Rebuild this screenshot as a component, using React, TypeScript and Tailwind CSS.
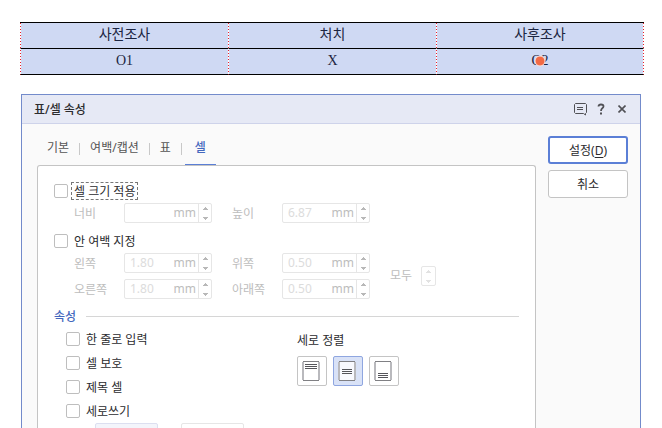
import { useState } from "react";

type AlignType = "top" | "middle" | "bottom";

interface SpinFieldProps {
  id: string;
  label: string;
  value: string;
}

function SpinArrows({ faint = false }: { faint?: boolean }) {
  return (
    <svg
      className={faint ? "text-[#e2e2e2]" : "text-[#b8b8b8]"}
      width="12"
      height="18"
      viewBox="0 0 12 18"
      fill="currentColor"
      shapeRendering="crispEdges"
      aria-hidden="true"
    >
      <path d="M6 3h1v1h1v1h1v1H4V5h1V4h1z" />
      <path d="M4 13h5v1H8v1H7v1H6v-1H5v-1H4z" />
    </svg>
  );
}

function SpinField({ id, label, value }: SpinFieldProps) {
  return (
    <div className="flex items-center">
      <label htmlFor={id} className="w-[50px] shrink-0 pt-[2px] leading-4 text-[#bdbdbd]">
        {label}
      </label>
      <div className="flex h-5 w-22 shrink-0 items-center rounded-[2px] border border-[#e6e6e6] bg-white">
        <input
          id={id}
          defaultValue={value}
          disabled
          className="w-10 min-w-0 flex-1 pl-[5px] text-[#dcdcdc]"
        />
        <span className="pr-[2px] text-[#bdbdbd]">mm</span>
        <span className="border-l border-[#e6e6e6]">
          <SpinArrows />
        </span>
      </div>
    </div>
  );
}

function CheckRow({ label, focused = false }: { label: string; focused?: boolean }) {
  return (
    <label className="flex h-[18px] items-center">
      <input
        type="checkbox"
        className="size-[14px] shrink-0 appearance-none rounded-[2px] border border-[#bebebe] bg-white checked:bg-[#5b7fd6]"
      />
      <span
        className={
          focused
            ? "ml-[3px] border border-dashed border-[#777777] px-[2px] pt-[2px] leading-[14px]"
            : "ml-[6px] pt-[2px] leading-4"
        }
      >
        {label}
      </span>
    </label>
  );
}

function AlignIcon({ type }: { type: AlignType }) {
  const top = { top: 4, middle: 9, bottom: 13 }[type];

  return (
    <svg width="18" height="20" viewBox="0 0 18 20" fill="none" aria-hidden="true">
      <rect x="0.5" y="0.5" width="17" height="19" rx="1.5" fill="#ffffff" fillOpacity="0.8" />
      <path d="M1 1v18M17 1v18" stroke="#b9b9bd" strokeWidth="2" />
      <path d="M1 .5h16M1 19.5h16" stroke="#808084" />
      {[0, 2, 4].map((offset) => (
        <path
          key={offset}
          d={`M${type === "top" ? 3 : 4} ${top + offset - 0.5}h${type === "top" ? 12 : 10}`}
          stroke="#55555a"
        />
      ))}
    </svg>
  );
}

const columns = ["사전조사", "처치", "사후조사"];
const tabs = ["기본", "여백/캡션", "표", "셀"];
const properties = ["한 줄로 입력", "셀 보호", "제목 셀", "세로쓰기"];
const alignments: { type: AlignType; title: string }[] = [
  { type: "top", title: "위" },
  { type: "middle", title: "가운데" },
  { type: "bottom", title: "아래" },
];

function DocumentTable() {
  // The table's red dots show through the transparent side borders of the cells
  const cell =
    "h-[26px] border-b border-l border-b-black border-l-transparent bg-[#cfd9f3] bg-clip-padding p-0 pb-px font-normal last:border-r last:border-r-transparent";

  return (
    <table className="w-full table-fixed border-separate border-spacing-0 border-t border-black bg-[repeating-linear-gradient(to_bottom,#e8202c_0px,#e8202c_1px,#ffffff_1px,#ffffff_3px)] text-center font-['Liberation_Serif','Noto_Sans_CJK_KR',serif] text-sm leading-5 text-[#1c2541]">
      <thead>
        <tr>
          {columns.map((name) => (
            <th key={name} className={cell}>
              {name}
            </th>
          ))}
        </tr>
      </thead>
      <tbody>
        <tr>
          <td className={cell}>O1</td>
          <td className={cell}>X</td>
          <td className={cell}>
            <span className="relative">
              O2
              {/* pointer marker */}
              <span className="absolute top-1/2 left-1/2 size-[11px] -translate-x-1/2 -translate-y-1/2 rounded-full border border-[#fbe3dc] bg-[#f26a45]" />
            </span>
          </td>
        </tr>
      </tbody>
    </table>
  );
}

function TitleBar() {
  return (
    <header className="flex h-[29px] items-center border-b border-[#ced3ea] bg-[#e6e9f5] pr-[11px] pl-3">
      <h1 className="flex-1 pt-[2px] font-medium">표/셀 속성</h1>
      <div className="flex items-center gap-[7px] text-[#505055]">
        <button type="button" aria-label="의견">
          <svg width="13" height="13" viewBox="0 0 13 13" fill="none" stroke="currentColor">
            <path d="M1.5 .5h10l1 1v8l-1 1v1.500l-2-1.500h-8l-1-1v-8z" />
            <path d="M3 4.500h6M3 6.500h6" />
          </svg>
        </button>
        <button type="button" aria-label="도움말" className="px-[3px]">
          <svg width="8" height="12" viewBox="0 0 8 12" fill="none" stroke="currentColor" strokeWidth="1.800">
            <path d="M1.500 3.500Q1.500 1.500 4 1.500t2.500 1.800Q6.500 4.500 5.300 5.300T4 8" />
            <path d="M4 9.500v2" strokeWidth="2" />
          </svg>
        </button>
        <button type="button" aria-label="닫기" className="p-[3px]">
          <svg width="8" height="8" viewBox="0 0 8 8" stroke="currentColor" strokeWidth="1.600">
            <path d="M.5.5l7 7M7.500.5l-7 7" />
          </svg>
        </button>
      </div>
    </header>
  );
}

function App() {
  const [activeTab, setActiveTab] = useState("셀");
  const [align, setAlign] = useState<AlignType>("middle");

  return (
    <main className="h-screen overflow-hidden bg-white pt-[22px] pr-[18px] pl-5 font-['Noto_Sans','Noto_Sans_CJK_KR',sans-serif] text-xs text-[#2b2b2e]">
      <DocumentTable />

      <section className="mt-[19px] mr-[3px] ml-px border border-[#738bcb] bg-[#fafafa] pb-5">
        <TitleBar />

        <div className="flex items-start gap-3 pr-3 pl-[15px]">
          <div className="min-w-0 flex-1">
            {/* Tabs */}
            <nav className="flex h-[41px] items-end">
              {tabs.map((tab, index) => (
                <div key={tab} className="flex items-end">
                  {index > 0 && <span className="mb-[10px] h-3 w-px bg-[#c8c8c8]" />}
                  <button
                    type="button"
                    onClick={() => setActiveTab(tab)}
                    className={`h-7 px-[10px] pb-[6px] ${
                      activeTab === tab
                        ? "ml-[3px] border-b border-[#5b7fd6] font-medium text-[#4468be]"
                        : "border-b border-transparent text-[#555555]"
                    }`}
                  >
                    {tab}
                  </button>
                </div>
              ))}
            </nav>

            <div className="rounded-t-[3px] border border-b-0 border-[#c4c4c4] bg-white px-4 pt-4 pb-10">
              {/* Cell size */}
              <CheckRow label="셀 크기 적용" focused />
              <div className="mt-[3px] ml-5 flex gap-5">
                <SpinField id="width" label="너비" value="" />
                <SpinField id="height" label="높이" value="6.87" />
              </div>

              {/* Inner margins */}
              <div className="mt-[9px]">
                <CheckRow label="안 여백 지정" />
              </div>
              <div className="mt-[3px] ml-5 flex items-center gap-5">
                <div className="flex flex-col gap-[6px]">
                  <SpinField id="left" label="왼쪽" value="1.80" />
                  <SpinField id="right" label="오른쪽" value="1.80" />
                </div>
                <div className="flex flex-col gap-[6px]">
                  <SpinField id="top" label="위쪽" value="0.50" />
                  <SpinField id="bottom" label="아래쪽" value="0.50" />
                </div>
                <div className="flex items-center gap-[9px] text-[#bdbdbd]">
                  모두
                  <button
                    type="button"
                    disabled
                    aria-label="모두"
                    className="rounded-[2px] border border-[#e6e6e6] pr-px"
                  >
                    <SpinArrows faint />
                  </button>
                </div>
              </div>

              {/* Properties */}
              <div className="mt-[9px] flex items-center gap-[10px]">
                <h2 className="pt-[2px] leading-[14px] font-medium text-[#4468be]">속성</h2>
                <span className="h-px flex-1 bg-[#d6d6d6]" />
              </div>
              <div className="mt-[6px] flex items-start pl-3">
                <div className="flex w-[231px] flex-col gap-[6px]">
                  {properties.map((name) => (
                    <CheckRow key={name} label={name} />
                  ))}
                </div>
                <fieldset>
                  <legend className="pt-[3px] leading-4">세로 정렬</legend>
                  <div className="mt-[7px] flex gap-[6px]">
                    {alignments.map(({ type, title }) => (
                      <button
                        key={type}
                        type="button"
                        title={title}
                        aria-pressed={align === type}
                        onClick={() => setAlign(type)}
                        className={`flex size-[30px] items-center justify-center rounded-[2px] border pr-[2px] ${
                          align === type
                            ? "border-[#8fa6e0] bg-[#d9e2f7]"
                            : "border-[#c4c4c4] bg-white"
                        }`}
                      >
                        <AlignIcon type={type} />
                      </button>
                    ))}
                  </div>
                </fieldset>
              </div>
              <div className="mt-[3px] ml-[41px] flex gap-[23px]">
                <button
                  type="button"
                  disabled
                  aria-label="영문 눕힘"
                  className="h-6 w-[63px] rounded-[2px] border border-[#dcdff0] bg-[#f3f5fb]"
                />
                <button
                  type="button"
                  disabled
                  aria-label="영문 세움"
                  className="h-6 w-[63px] rounded-[2px] border border-[#e6e6e6] bg-white"
                />
              </div>
            </div>
          </div>

          {/* Dialog actions */}
          <div className="flex w-20 shrink-0 flex-col gap-[6px] pt-3">
            <button
              type="button"
              className="h-7 rounded-[3px] border-2 border-[#5b7fd6] bg-white pt-px"
            >
              설정(<span className="underline underline-offset-2">D</span>)
            </button>
            <button
              type="button"
              className="h-7 rounded-[3px] border border-[#c4c4c4] bg-white pt-px"
            >
              취소
            </button>
          </div>
        </div>
      </section>
    </main>
  );
}

export default App;
